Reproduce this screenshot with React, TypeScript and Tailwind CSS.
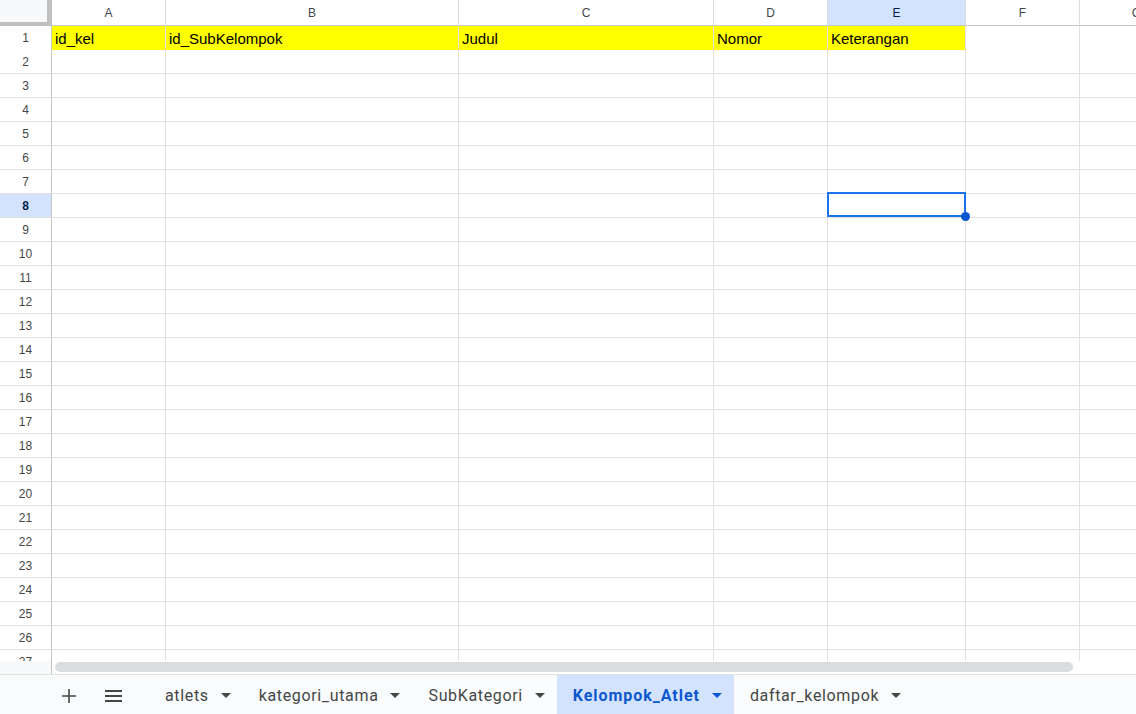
import React from 'react';

const COLS = ['A', 'B', 'C', 'D', 'E', 'F', 'G'];
const HEADER_ROW = ['id_kel', 'id_SubKelompok', 'Judul', 'Nomor', 'Keterangan'];
const TABS = ['atlets', 'kategori_utama', 'SubKategori', 'Kelompok_Atlet', 'daftar_kelompok'];
const ACTIVE_TAB = 'Kelompok_Atlet';
const SEL_ROW = 8;
const SEL_COL = 4;

const gridCols = 'grid grid-cols-[52px_114px_293px_255px_114px_138px_114px_114px] w-[1194px]';

function Caret({ className }: { className?: string }) {
  return (
    <svg width="10" height="5" viewBox="0 0 10 5" className={className}>
      <path d="M0 0h10L5 5z" fill="currentColor" />
    </svg>
  );
}

function Row({ n }: { n: number }) {
  const isSel = n === SEL_ROW;
  return (
    <div className={`${gridCols} h-6`}>
      <div
        className={`flex items-center justify-center border-r border-b border-r-[#c4c7c5] border-b-[#e1e1e1] text-[12px] ${
          isSel ? 'bg-[#d3e3fd] text-[#041e49] font-bold' : 'bg-white text-[#444746]'
        }`}
      >
        {n}
      </div>
      {COLS.map((c, i) => {
        const yellow = n === 1 && i < HEADER_ROW.length;
        const selected = isSel && i === SEL_COL;
        return (
          <div
            key={c}
            className={`relative flex items-center border-r border-b border-[#e1e1e1] pl-[3px] pt-[2px] text-[15px] text-black whitespace-nowrap ${
              yellow ? 'bg-[#ffff00] border-b-[#d9d900]' : 'bg-white'
            }`}
          >
            {n === 1 ? HEADER_ROW[i] : null}
            {selected && (
              <>
                <div className="absolute -left-px -top-[2px] -right-px bottom-0 border-2 border-[#1a73e8]" />
                <div className="absolute -right-[5px] -bottom-[4px] w-[9px] h-[9px] rounded-full bg-[#0b57d0] z-10" />
              </>
            )}
          </div>
        );
      })}
    </div>
  );
}

export default function App() {
  const rows = Array.from({ length: 27 }, (_, i) => i + 1);

  return (
    <div className="w-[1136px] h-[714px] flex flex-col bg-white overflow-hidden font-['Liberation_Sans',Arial,sans-serif]">
      {/* grid */}
      <div className="h-[661px] overflow-hidden">
        <div className={`${gridCols} h-[26px]`}>
          <div className="bg-[#f8f9fa] border-r-[5px] border-b-[4px] border-[#c0c0c0]" />
          {COLS.map((c, i) => (
            <div
              key={c}
              className={`flex items-center justify-center border-r border-b border-r-[#dadce0] border-b-[#c4c7c5] text-[12px] ${
                i === SEL_COL ? 'bg-[#d3e3fd] text-[#041e49]' : 'bg-white text-[#444746]'
              }`}
            >
              {c}
            </div>
          ))}
        </div>
        {rows.map((n) => (
          <Row key={n} n={n} />
        ))}
      </div>

      {/* horizontal scrollbar */}
      <div className="h-[13px] flex">
        <div className="w-[52px] bg-[#f8f9fa] border-r border-[#c4c7c5]" />
        <div className="w-[1018px] h-[10px] mt-px ml-[3px] rounded-full bg-[#dadce0]" />
      </div>

      {/* sheet tabs */}
      <div className="h-10 flex items-stretch bg-[#f9fbfd] border-t border-[#e1e3e1] pl-[51px] font-['Roboto',sans-serif] text-[#444746]">
        <button className="w-9 flex items-center justify-center pt-[2px]">
          <svg width="14" height="14" viewBox="0 0 14 14">
            <path d="M7 0v14M0 7h14" stroke="#444746" strokeWidth="1.6" />
          </svg>
        </button>
        <button className="w-9 ml-2 flex items-center justify-center pt-[2px]">
          <svg width="17" height="12" viewBox="0 0 17 12">
            <path d="M0 1h17M0 6h17M0 11h17" stroke="#444746" strokeWidth="1.8" />
          </svg>
        </button>
        <div className="flex ml-[18px]">
          {TABS.map((t) => {
            const active = t === ACTIVE_TAB;
            return (
              <div
                key={t}
                className={`flex items-center pl-4 pr-3 pt-[2px] text-[16px] ${
                  active ? 'bg-[#d3e3fd] text-[#0b57d0] font-bold tracking-[0.95px]' : 'tracking-[0.65px]'
                }`}
              >
                <span>{t}</span>
                <Caret className="ml-3" />
              </div>
            );
          })}
        </div>
      </div>
    </div>
  );
}
